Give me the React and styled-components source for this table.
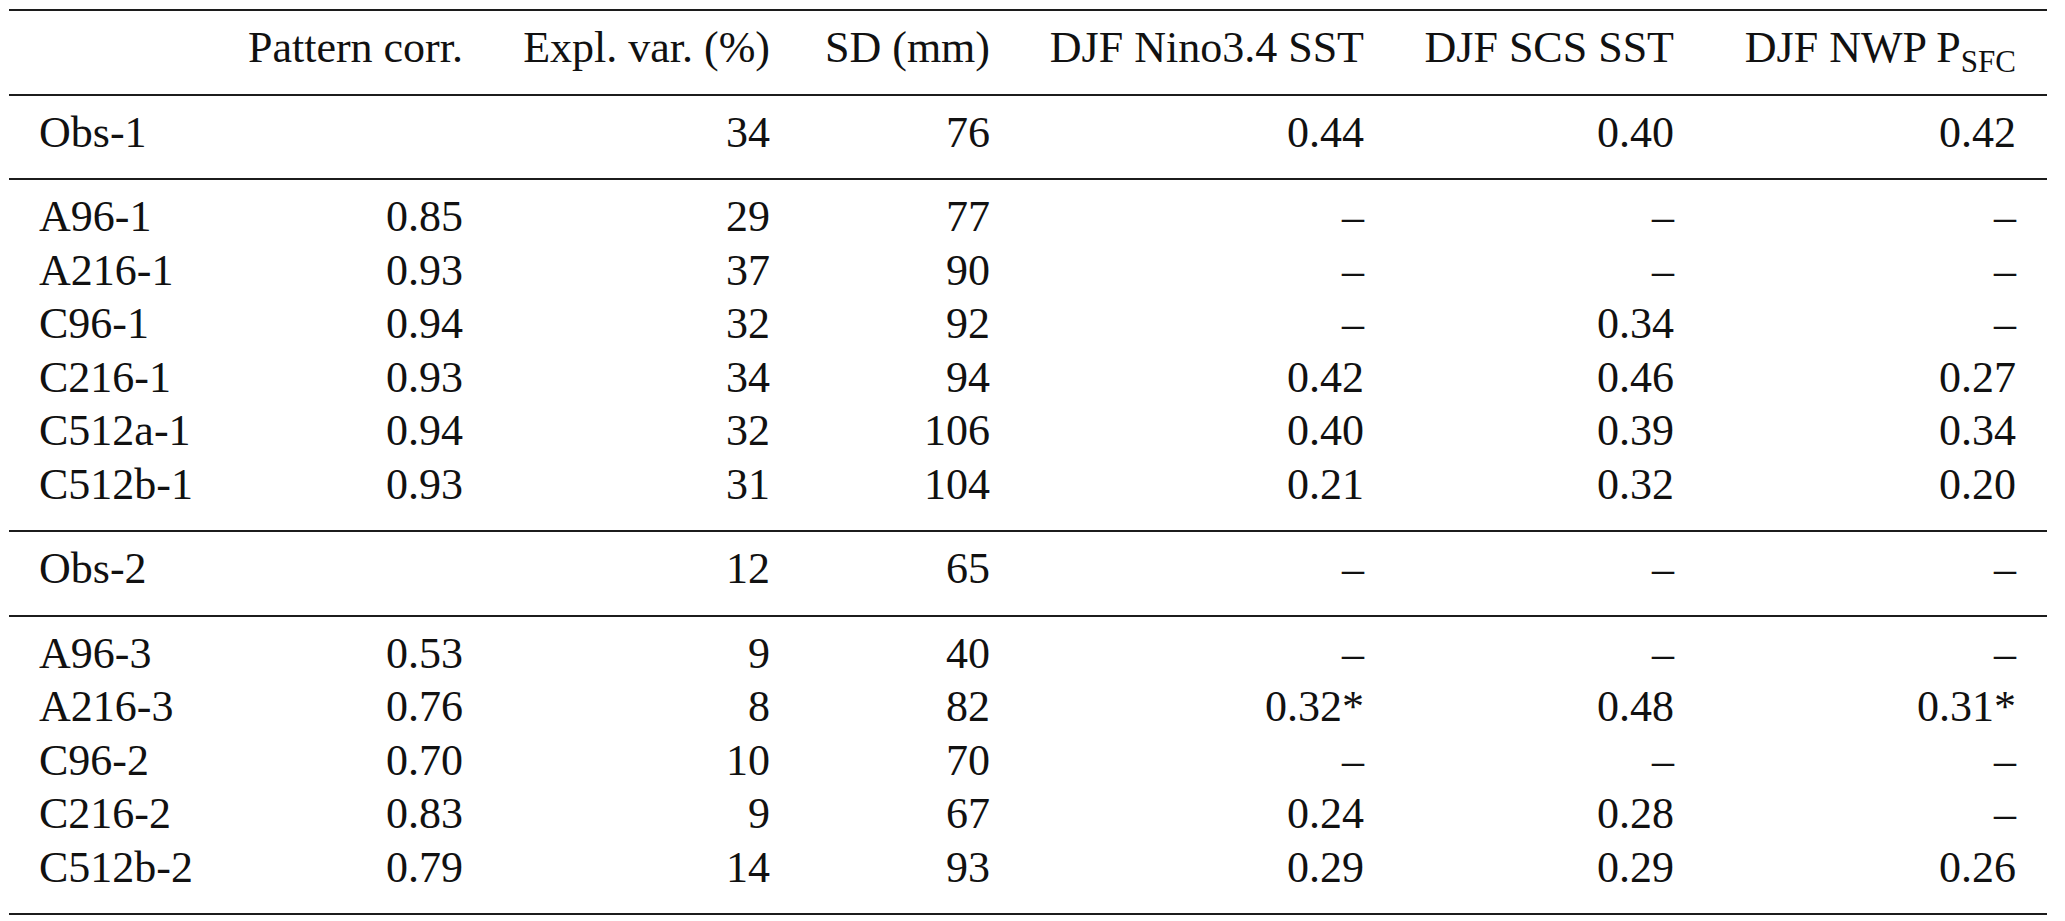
import React from "react";
import styled, { createGlobalStyle } from "styled-components";

const GlobalStyle = createGlobalStyle`
    html, body {
        margin: 0;
        padding: 0;
        background: #ffffff;
    }
`;

const Page = styled.div`
    padding: 9px 18px 0 9px;
    width: 2065px;
    box-sizing: border-box;
    color: #111111;
    font-family: "Liberation Serif", "Times New Roman", serif;
`;

const Table = styled.div`
    display: flex;
    flex-direction: column;
    width: 2038px;
`;

const Rule = styled.div`
    height: 2px;
    background-color: #1c1c1c;
`;

const Block = styled.div`
    display: flex;
    flex-direction: column;
    padding: 10px 0 19px 0;
`;

const Row = styled.div`
    display: grid;
    grid-template-columns: 230px 224px 307px 220px 374px 310px 342px 31px;
    height: 53.5px;
    line-height: 53.5px;
    font-family: "Liberation Serif", "Times New Roman", serif;
    font-size: 44px;
    white-space: nowrap;
`;

const Cell = styled.div`
    text-align: ${(props) => (props.left ? "left" : "right")};
    padding-left: ${(props) => (props.left ? "30px" : "0")};
`;

const Sub = styled.sub`
    font-size: 31px;
    vertical-align: -10px;
    line-height: 0;
`;

const header = [
    "Pattern corr.",
    "Expl. var. (%)",
    "SD (mm)",
    "DJF Nino3.4 SST",
    "DJF SCS SST",
];

const groups = [
    [["Obs-1", "", "34", "76", "0.44", "0.40", "0.42"]],
    [
        ["A96-1", "0.85", "29", "77", "–", "–", "–"],
        ["A216-1", "0.93", "37", "90", "–", "–", "–"],
        ["C96-1", "0.94", "32", "92", "–", "0.34", "–"],
        ["C216-1", "0.93", "34", "94", "0.42", "0.46", "0.27"],
        ["C512a-1", "0.94", "32", "106", "0.40", "0.39", "0.34"],
        ["C512b-1", "0.93", "31", "104", "0.21", "0.32", "0.20"],
    ],
    [["Obs-2", "", "12", "65", "–", "–", "–"]],
    [
        ["A96-3", "0.53", "9", "40", "–", "–", "–"],
        ["A216-3", "0.76", "8", "82", "0.32*", "0.48", "0.31*"],
        ["C96-2", "0.70", "10", "70", "–", "–", "–"],
        ["C216-2", "0.83", "9", "67", "0.24", "0.28", "–"],
        ["C512b-2", "0.79", "14", "93", "0.29", "0.29", "0.26"],
    ],
];

const DataRow = ({ cells }) => (
    <Row>
        <Cell left>{cells[0]}</Cell>
        {cells.slice(1).map((c, i) => (
            <Cell key={i}>{c}</Cell>
        ))}
    </Row>
);

export default function App() {
    return (
        <Page>
            <GlobalStyle />
            <Table>
                <Rule />
                <Block>
                    <Row>
                        <Cell left></Cell>
                        {header.map((h) => (
                            <Cell key={h}>{h}</Cell>
                        ))}
                        <Cell>
                            DJF NWP P<Sub>SFC</Sub>
                        </Cell>
                    </Row>
                </Block>
                {groups.map((g, gi) => (
                    <React.Fragment key={gi}>
                        <Rule />
                        <Block>
                            {g.map((r) => (
                                <DataRow key={r[0]} cells={r} />
                            ))}
                        </Block>
                    </React.Fragment>
                ))}
                <Rule />
            </Table>
        </Page>
    );
}
